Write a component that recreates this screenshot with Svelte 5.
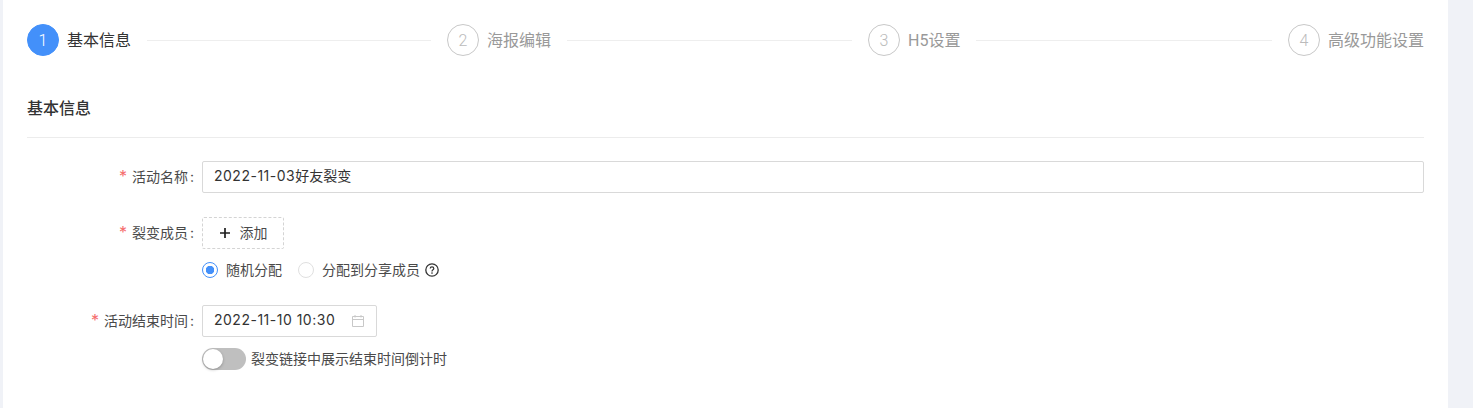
<script>
	const steps = [
		{ num: 1, title: '基本信息', active: true },
		{ num: 2, title: '海报编辑' },
		{ num: 3, title: 'H5设置' },
		{ num: 4, title: '高级功能设置' }
	]
</script>

<main class="card">
	<div class="steps">
		{#each steps as step, i}
			{#if i > 0}
				<div class="step_line"></div>
			{/if}
			<div class="step" class:active={step.active}>
				<span class="step_num">{step.num}</span>
				<span class="step_title">{step.title}</span>
			</div>
		{/each}
	</div>

	<h2 class="section_title">基本信息</h2>

	<form class="form">
		<div class="row name_row">
			<div class="label"><span class="star">*</span>活动名称<span class="colon">:</span></div>
			<div class="control">
				<div class="input"><span class="digits">2022-11-03</span>好友裂变</div>
			</div>
		</div>

		<div class="row member_row">
			<div class="label"><span class="star">*</span>裂变成员<span class="colon">:</span></div>
			<div class="control">
				<div class="add_btn">
					<svg width="12" height="12" viewBox="0 0 12 12">
						<path d="M6 1v10M1 6h10" stroke="#1f1f1f" stroke-width="1.7" fill="none" />
					</svg>
					<span class="lift">添加</span>
				</div>
				<div class="radios">
					<span class="radio checked"></span>
					<span class="radio_text lift">随机分配</span>
					<span class="radio second"></span>
					<span class="radio_text lift">分配到分享成员</span>
					<svg class="help" width="14" height="14" viewBox="0 0 14 14">
						<circle cx="7" cy="7" r="6.2" stroke="#333" stroke-width="1.3" fill="none" />
						<path d="M5.2 5.6c0-1.1.8-1.7 1.8-1.7s1.8.6 1.8 1.6c0 1.4-1.8 1.3-1.8 2.9" stroke="#333" stroke-width="1.2" fill="none" />
						<circle cx="7" cy="10.1" r=".8" fill="#333" />
					</svg>
				</div>
			</div>
		</div>

		<div class="row time_row">
			<div class="label"><span class="star">*</span>活动结束时间<span class="colon">:</span></div>
			<div class="control">
				<div class="input date">
					<span class="digits lift">2022-11-10 10:30</span>
					<svg width="14" height="14" viewBox="0 0 14 14">
						<path d="M1.5 2.5h11v10h-11zM1.5 5.5h11M4 1v2.5M10 1v2.5" stroke="#c8c8c8" stroke-width="1" fill="none" />
					</svg>
				</div>
				<div class="switch_row">
					<span class="switch"><span class="knob"></span></span>
					<span class="switch_text lift">裂变链接中展示结束时间倒计时</span>
				</div>
			</div>
		</div>
	</form>
</main>

<style>
	:global(body) {
		background: #f0f2f7;
		font-family: "Inter", "Noto Sans CJK SC", sans-serif;
	}

	.card {
		box-sizing: border-box;
		width: 1445px;
		height: 408px;
		margin-left: 3px;
		padding: 24px 24px 0;
		background: #fff;
	}

	.steps {
		display: flex;
		align-items: center;
		height: 32px;
	}

	.step {
		display: flex;
		align-items: center;
		flex-shrink: 0;
		color: #999;
		font-size: 16px;
	}

	.step_num {
		box-sizing: border-box;
		display: flex;
		align-items: center;
		justify-content: center;
		width: 32px;
		height: 32px;
		margin-right: 8px;
		border: 1px solid #c8c8c8;
		border-radius: 50%;
		color: #bbb;
		font-family: "Roboto", sans-serif;
		font-weight: 300;
	}

	.step_title {
		padding-bottom: 2px;
		font-family: "Roboto", "Noto Sans CJK SC", sans-serif;
	}

	.step.active {
		color: #333;
	}

	.step.active .step_num {
		background: #4390fa;
		border-color: #4390fa;
		color: #fff;
	}

	.step_line {
		flex: 0 0 284px;
		height: 1px;
		margin: 0 16px;
		background: #eee;
	}

	.step_line:nth-child(4) {
		flex-basis: 285px;
	}

	.step_line:nth-last-child(2) {
		flex: 1;
	}

	.section_title {
		margin: 0;
		padding: 40px 0 17px;
		border-bottom: 1px solid #ececec;
		color: #333;
		font-size: 16px;
		line-height: 24px;
		font-weight: 500;
	}

	.form {
		font-size: 14px;
		color: #333;
	}

	.digits {
		letter-spacing: 0.5px;
	}

	.lift {
		padding-bottom: 2px;
	}

	.row {
		display: flex;
	}

	.name_row {
		margin-top: 23px;
	}

	.member_row {
		margin-top: 24px;
	}

	.time_row {
		margin-top: 25px;
	}

	.label {
		flex: 0 0 167px;
		margin-right: 8px;
		line-height: 30px;
		text-align: right;
		color: #4a4a4a;
		white-space: nowrap;
	}

	.star {
		margin-right: 5px;
		color: #f56c6c;
		font-size: 16px;
	}

	.colon {
		margin-left: 2px;
	}

	.control {
		flex: 1;
	}

	.input {
		box-sizing: border-box;
		height: 32px;
		padding: 0 11px;
		border: 1px solid #d9d9d9;
		border-radius: 2px;
		line-height: 28px;
		color: #333;
	}

	.date {
		display: flex;
		align-items: center;
		justify-content: space-between;
		width: 175px;
	}

	.add_btn {
		box-sizing: border-box;
		display: flex;
		align-items: center;
		justify-content: center;
		gap: 9px;
		width: 82px;
		height: 32px;
		border: 1px dashed #d4d4d4;
		border-radius: 2px;
		color: #4a4a4a;
	}

	.radios {
		display: flex;
		align-items: center;
		height: 20px;
		margin-top: 11px;
		color: #4a4a4a;
	}

	.radio {
		box-sizing: border-box;
		width: 16px;
		height: 16px;
		border: 1px solid #e0e0e0;
		border-radius: 50%;
	}

	.radio.checked {
		border-color: #4390fa;
		background: radial-gradient(circle, #4390fa 0 4px, #fff 4.5px);
	}

	.radio.second {
		margin-left: 16px;
	}

	.radio_text {
		margin-left: 8px;
	}

	.help {
		margin-left: 5px;
	}

	.switch_row {
		display: flex;
		align-items: center;
		margin-top: 11px;
		color: #4a4a4a;
	}

	.switch {
		position: relative;
		width: 44px;
		height: 22px;
		margin-right: 5px;
		border-radius: 11px;
		background: #bfbfbf;
	}

	.knob {
		position: absolute;
		top: 1px;
		left: 1px;
		width: 20px;
		height: 20px;
		border-radius: 50%;
		background: #fff;
		box-shadow: 0 1px 3px rgba(0, 0, 0, 0.25);
	}
</style>
